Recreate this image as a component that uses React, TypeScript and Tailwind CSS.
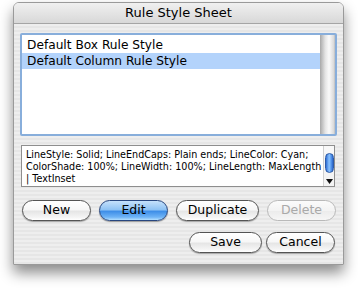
import React from "react";

const font = { fontFamily: '"DejaVu Sans", "Liberation Sans", sans-serif' };

function AquaButton({
  label,
  width,
  variant = "normal",
}: {
  label: string;
  width: string;
  variant?: "normal" | "default" | "disabled";
}) {
  const base =
    "h-[21px] rounded-full flex items-center justify-center text-[12.5px] leading-none shrink-0 relative overflow-hidden";
  if (variant === "default") {
    return (
      <div
        className={`${base} ${width} border border-[#27467f] text-black bg-[linear-gradient(to_bottom,#c5e1fb_0%,#8fc3f4_45%,#3f8fe8_55%,#6fb4f6_85%,#b4e0ff_100%)] shadow-[0_1px_1px_rgba(0,0,0,0.35)]`}
      >
        {label}
      </div>
    );
  }
  if (variant === "disabled") {
    return (
      <div
        className={`${base} ${width} border border-[#b9b9b9] text-[#a9a9a9] bg-[linear-gradient(to_bottom,#fbfbfb_0%,#f3f3f3_50%,#ececec_55%,#f6f6f6_100%)]`}
      >
        {label}
      </div>
    );
  }
  return (
    <div
      className={`${base} ${width} border border-[#545454] text-black bg-[linear-gradient(to_bottom,#ffffff_0%,#f7f7f7_45%,#e6e6e6_55%,#f4f4f4_85%,#ffffff_100%)] shadow-[0_1px_1px_rgba(0,0,0,0.3)]`}
    >
      {label}
    </div>
  );
}

export default function App() {
  return (
    <div className="w-[358px] h-[288px] bg-white relative overflow-hidden" style={font}>
      {/* Window */}
      <div className="absolute left-[13px] top-[2px] w-[331px] h-[263px] rounded-t-[6px] overflow-hidden flex flex-col shadow-[0_8px_14px_rgba(0,0,0,0.45)] border border-[#9a9a9a]">
        {/* Title bar */}
        <div className="h-[21px] shrink-0 flex items-center justify-center text-[13px] text-black bg-[linear-gradient(to_bottom,#f0f0f0,#d8d8d8)] border-b border-[#a5a5a5]">
          Rule Style Sheet
        </div>

        {/* Body */}
        <div className="flex-1 flex flex-col px-[6px] pt-[9px] bg-[repeating-linear-gradient(to_bottom,#eeeeee_0px,#eeeeee_2px,#e6e6e6_2px,#e6e6e6_4px)]">
          {/* List with focus ring */}
          <div className="w-[317px] h-[103px] rounded-[2px] border-2 border-[#88aedb] flex bg-white">
            <div className="flex-1 flex flex-col pt-[2px] text-[12.2px]">
              <div className="h-[16px] pl-[5px] flex items-center">Default Box Rule Style</div>
              <div className="h-[16px] pl-[5px] flex items-center bg-[#b3d3fb]">
                Default Column Rule Style
              </div>
            </div>
            <div className="w-[15px] bg-[linear-gradient(to_right,#a8a8a8,#e4e4e4_35%,#fafafa_60%,#dcdcdc_90%,#bdbdbd)]" />
          </div>

          {/* Description */}
          <div className="mt-[9px] w-[314px] ml-[1px] h-[42px] border border-[#8e8e8e] bg-white flex">
            <div className="flex-1 text-[9.6px] leading-[12px] pl-[4px] pt-[3px] overflow-hidden whitespace-nowrap">
              LineStyle: Solid; LineEndCaps: Plain ends; LineColor: Cyan;
              <br />
              ColorShade: 100%; LineWidth: 100%; LineLength: MaxLength
              <br />| TextInset
            </div>
            <div className="w-[11px] flex flex-col items-center border-l border-[#d0d0d0] bg-[#f4f4f4]">
              <div className="h-[7px] w-full bg-[#f8f8f8]" />
              <div className="w-[9px] h-[20px] rounded-full border border-[#2d5ba8] bg-[linear-gradient(to_right,#2f6fd6,#8cc4ff_45%,#5a9cf0_70%,#2a63c8)]" />
              <div className="flex-1 w-full flex items-end justify-center pb-[2px]">
                <svg width="7" height="5" viewBox="0 0 7 5">
                  <path d="M0 0 H7 L3.5 5 Z" fill="#111" />
                </svg>
              </div>
            </div>
          </div>

          {/* Buttons row 1 */}
          <div className="mt-[13px] flex items-center gap-[8px] pl-[2px]">
            <AquaButton label="New" width="w-[69px]" />
            <AquaButton label="Edit" width="w-[69px]" variant="default" />
            <AquaButton label="Duplicate" width="w-[83px]" />
            <AquaButton label="Delete" width="w-[69px]" variant="disabled" />
          </div>

          {/* Buttons row 2 */}
          <div className="mt-[11px] flex items-center justify-end gap-[4px] pr-[2px]">
            <AquaButton label="Save" width="w-[73px]" />
            <AquaButton label="Cancel" width="w-[69px]" />
          </div>
        </div>
      </div>
    </div>
  );
}
